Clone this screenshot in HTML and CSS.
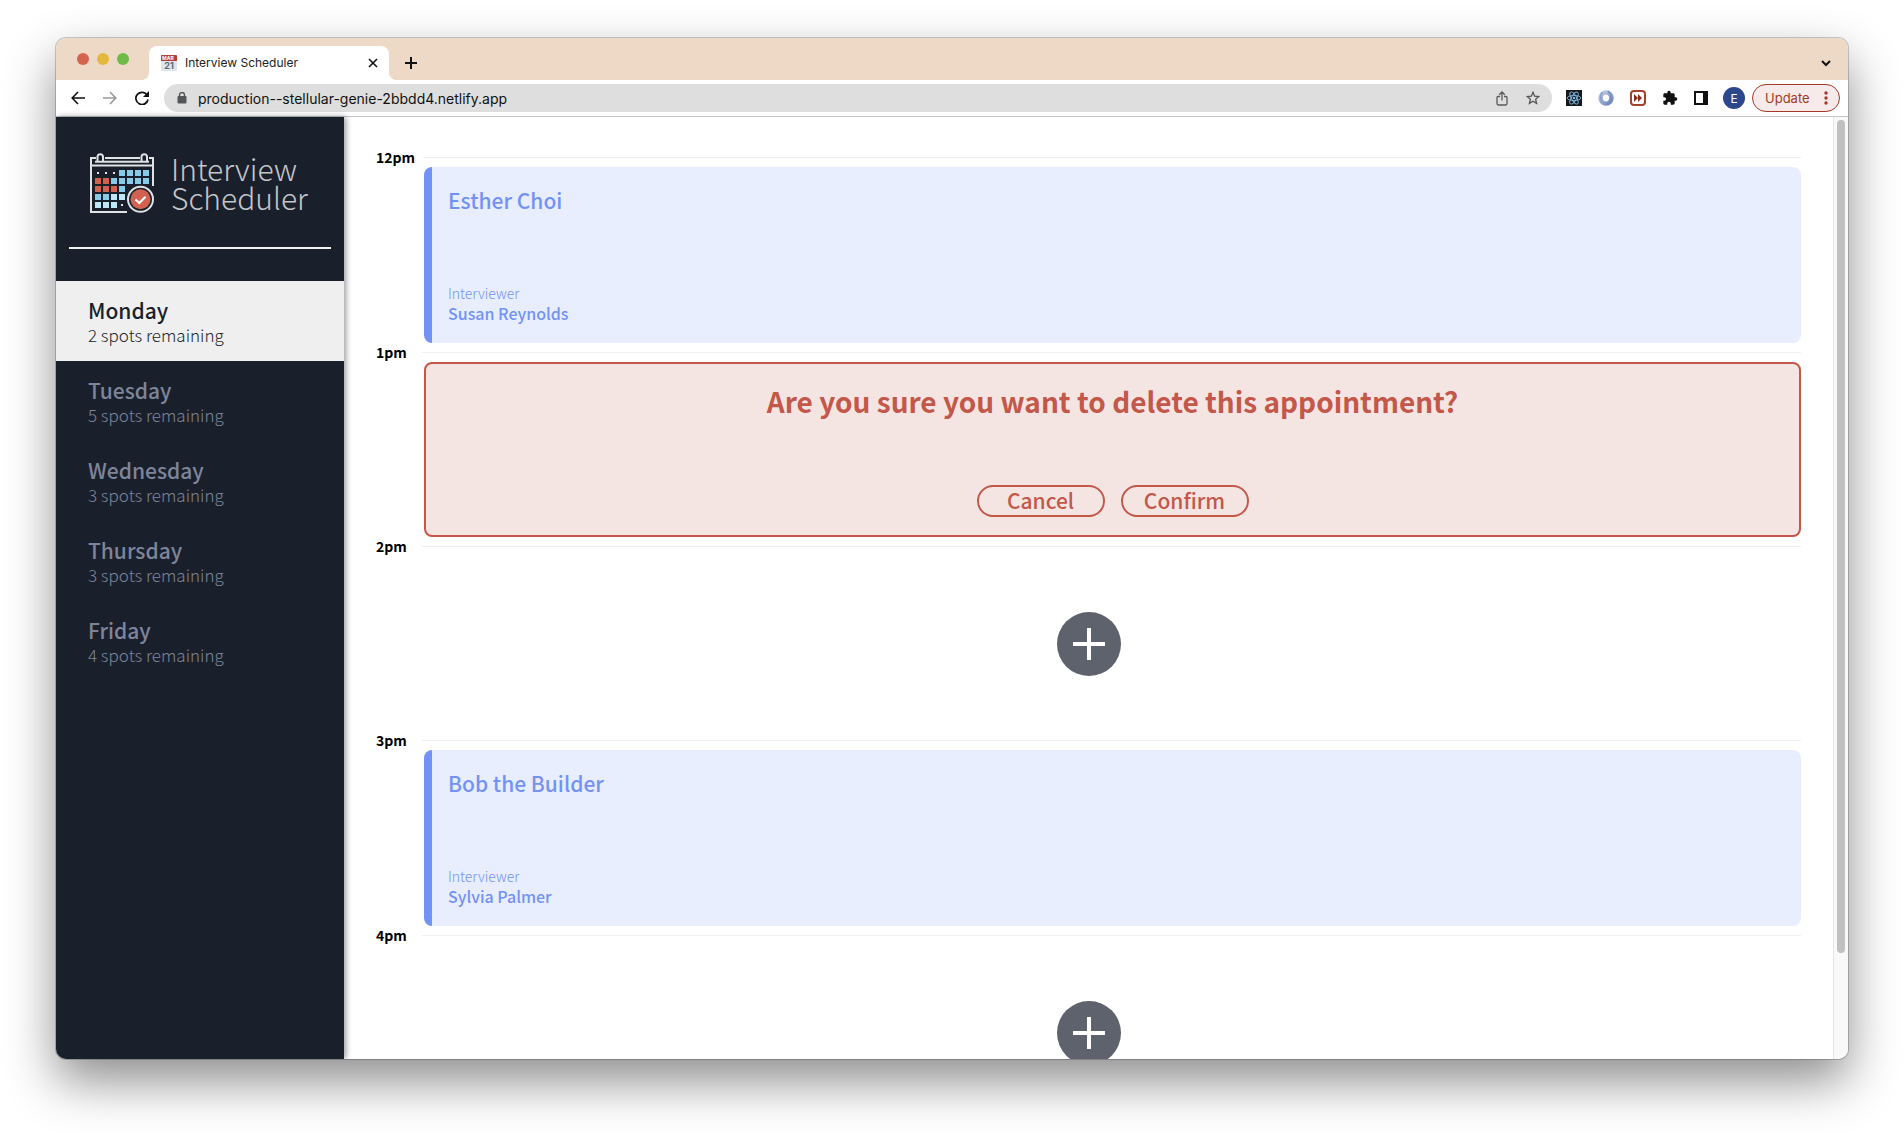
FILE: index.html
```html
<!DOCTYPE html>
<html lang="en">
<head>
<meta charset="utf-8">
<title>Interview Scheduler</title>
<link rel="stylesheet" href="styles.css">
</head>
<body>
<div class="window">
  <header class="tab-strip">
    <div class="lights">
      <span class="light light--close"></span>
      <span class="light light--min"></span>
      <span class="light light--max"></span>
    </div>
    <div class="tab">
      <svg class="favicon" viewBox="0 0 16 16" aria-hidden="true">
        <rect width="16" height="16" rx="1" fill="#dfe5ea"/>
        <path d="M0 1a1 1 0 0 1 1-1h14a1 1 0 0 1 1 1v5H0z" fill="#b5403b"/>
        <text x="1" y="5" class="favicon-month">MAR</text>
        <text x="8" y="14" class="favicon-day">21</text>
      </svg>
      <span class="tab-title">Interview Scheduler</span>
      <button class="icon-button tab-close" aria-label="Close tab">
        <svg width="10" height="10" viewBox="0 0 10 10"><path d="M1 1l8 8M9 1l-8 8" stroke="#111" stroke-width="1.6"/></svg>
      </button>
    </div>
    <button class="icon-button" aria-label="New tab">
      <svg width="12" height="12" viewBox="0 0 12 12"><path d="M6 0v12M0 6h12" stroke="#111" stroke-width="2"/></svg>
    </button>
    <button class="icon-button tab-search" aria-label="Search tabs">
      <svg width="10" height="7" viewBox="0 0 10 7"><path d="M1 1l4 4 4-4" fill="none" stroke="#111" stroke-width="2"/></svg>
    </button>
  </header>

  <nav class="toolbar" aria-label="Browser">
    <button class="icon-button" aria-label="Back">
      <svg width="14" height="14" viewBox="0 0 14 14"><path d="M14 7H1.500M7 1L1.200 7 7 13" fill="none" stroke="#111" stroke-width="1.600"/></svg>
    </button>
    <button class="icon-button" aria-label="Forward">
      <svg width="14" height="14" viewBox="0 0 14 14"><path d="M0 7h12.500M7 1l5.800 6L7 13" fill="none" stroke="#999" stroke-width="1.600"/></svg>
    </button>
    <button class="icon-button" aria-label="Reload">
      <svg width="14" height="14" viewBox="0 0 14 14"><path d="M12.300 4.400A6.100 6.100 0 1 0 13 8.500" fill="none" stroke="#111" stroke-width="1.700"/><path d="M14 0v6H8z" fill="#111"/></svg>
    </button>
    <div class="address">
      <svg width="10" height="12" viewBox="0 0 10 12" aria-hidden="true"><path d="M2.500 5V3a2.500 2.500 0 0 1 5 0v2" fill="none" stroke="#55565a" stroke-width="1.400"/><rect x="0.500" y="4" width="9" height="7.500" rx="1" fill="#55565a"/></svg>
      <input class="address-input" type="text" aria-label="Address" value="production--stellular-genie-2bbdd4.netlify.app">
      <button class="icon-button" aria-label="Share">
        <svg width="12" height="15" viewBox="0 0 12 15"><path d="M4 5.500H2A1 1 0 0 0 1 6.500v6A1.500 1.500 0 0 0 2.500 14h7a1.500 1.500 0 0 0 1.500-1.500v-6a1 1 0 0 0-1-1H8M6 9.500V1.500M3.200 3.800L6 1l2.800 2.800" fill="none" stroke="#5a5a5a" stroke-width="1.300"/></svg>
      </button>
      <button class="icon-button" aria-label="Bookmark">
        <svg width="14" height="14" viewBox="0 0 14 14"><path d="M7 1.300l1.650 3.900 4.150.35-3.150 2.750.95 4.100L7 10.200l-3.600 2.200.95-4.100L1.200 5.550l4.150-.35z" fill="none" stroke="#555" stroke-width="1.300"/></svg>
      </button>
    </div>
    <div class="extensions">
      <button class="icon-button" aria-label="React Developer Tools">
        <svg width="16" height="16" viewBox="0 0 16 16"><rect width="16" height="16" fill="#16181c"/><g fill="none" stroke="#7cb6dc" stroke-width="0.900"><ellipse cx="8" cy="8" rx="6.800" ry="2.600"/><ellipse cx="8" cy="8" rx="6.800" ry="2.600" transform="rotate(60 8 8)"/><ellipse cx="8" cy="8" rx="6.800" ry="2.600" transform="rotate(120 8 8)"/></g><circle cx="8" cy="8" r="1.300" fill="#7cb6dc"/></svg>
      </button>
      <button class="icon-button" aria-label="JSON viewer">
        <svg width="16" height="16" viewBox="0 0 16 16"><defs><linearGradient id="ring" x1="0" y1="0" x2="1" y2="1"><stop offset="0" stop-color="#c3cfe6"/><stop offset="1" stop-color="#6a82b8"/></linearGradient></defs><circle cx="8" cy="8" r="5.400" fill="none" stroke="url(#ring)" stroke-width="4.600"/><path d="M4.500 2C1 6 2.500 12 6 14.500" fill="none" stroke="#8da0cb" stroke-width="1.600"/><path d="M10 1.200c4 3 4 8 0 12" fill="none" stroke="#7b91c2" stroke-width="1.600"/><ellipse cx="8" cy="8" rx="2.600" ry="3.600" fill="#fff"/></svg>
      </button>
      <button class="icon-button" aria-label="Playback speed">
        <svg width="16" height="16" viewBox="0 0 16 16"><rect x="1" y="1" width="14" height="14" rx="3" fill="#fff" stroke="#a3412b" stroke-width="2"/><path d="M4 4l4 4-4 4zM8 4l4 4-4 4z" fill="#8a2c1a"/></svg>
      </button>
      <button class="icon-button" aria-label="Extensions">
        <svg width="16" height="16" viewBox="0 0 24 24"><path d="M20.500 11H19V7c0-1.100-.9-2-2-2h-4V3.500a2.500 2.500 0 0 0-5 0V5H4c-1.100 0-2 .9-2 2v3.800h1.500a2.700 2.700 0 0 1 0 5.400H2V20c0 1.100.9 2 2 2h3.800v-1.500a2.700 2.700 0 0 1 5.400 0V22H17c1.100 0 2-.9 2-2v-4h1.500a2.500 2.500 0 0 0 0-5z" fill="#111"/></svg>
      </button>
      <button class="icon-button" aria-label="Side panel">
        <svg width="14" height="14" viewBox="0 0 14 14"><path d="M0 0h14v14H0z" fill="#111"/><path d="M2 2h7v10H2z" fill="#fff"/></svg>
      </button>
      <button class="avatar" aria-label="Profile">E</button>
    </div>
    <button class="update">Update
      <svg width="4" height="14" viewBox="0 0 4 14" aria-hidden="true"><g fill="#a33a26"><circle cx="2" cy="2" r="1.700"/><circle cx="2" cy="7" r="1.700"/><circle cx="2" cy="12" r="1.700"/></g></svg>
    </button>
  </nav>

  <main class="layout">
    <section class="sidebar">
      <div class="logo">
        <svg class="logo-mark" viewBox="0 0 66 62" aria-hidden="true">
          <g fill="none" stroke="#dfe3e4" stroke-width="2">
            <path d="M7 6H2v54h36M16 6h35M60 6h4v28M1 13.500h63M6 9.800h54"/>
            <path d="M8.500 9V4.500a2.800 2.800 0 0 1 5.500 0V9M52.500 9V4.500a2.800 2.800 0 0 1 5.500 0V9"/>
          </g>
          <g fill="#dfe3e4"><path d="M8 20h2v2H8zM16 20h2v2h-2zM24 20h2v2h-2zM32 52h2v2h-2z"/></g>
          <g fill="#87cbe9"><path d="M30 18h6v6h-6zM38 18h6v6h-6zM46 18h6v6h-6zM54 18h6v6h-6zM22 26h6v6h-6zM30 26h6v6h-6zM38 26h6v6h-6zM46 26h6v6h-6zM54 26h6v6h-6zM30 34h6v6h-6zM6 42h6v6H6zM14 42h6v6h-6z"/></g>
          <g fill="#bfe8f7"><path d="M22 42h6v6h-6zM30 42h6v6h-6zM6 50h6v6H6zM14 50h6v6h-6zM22 50h6v6h-6z"/></g>
          <g fill="#d2624f"><path d="M6 26h6v6H6zM14 26h6v6h-6zM6 34h6v6H6zM14 34h6v6h-6zM22 34h6v6h-6z"/></g>
          <circle cx="51.500" cy="47.300" r="12.500" fill="#1a1f2c" stroke="#dfe3e4" stroke-width="2"/>
          <circle cx="51.500" cy="47.300" r="10" fill="#d2624f"/>
          <path d="M46.500 47.500l3.800 3.500 6.200-6.200" fill="none" stroke="#fff" stroke-width="2.200"/>
        </svg>
        <h1 class="logo-text">Interview Scheduler</h1>
      </div>
      <hr class="divider">
      <ul class="days">
        <li class="day day--selected"><h2 class="day-name">Monday</h2><p class="day-spots">2 spots remaining</p></li>
        <li class="day"><h2 class="day-name">Tuesday</h2><p class="day-spots">5 spots remaining</p></li>
        <li class="day"><h2 class="day-name">Wednesday</h2><p class="day-spots">3 spots remaining</p></li>
        <li class="day"><h2 class="day-name">Thursday</h2><p class="day-spots">3 spots remaining</p></li>
        <li class="day"><h2 class="day-name">Friday</h2><p class="day-spots">4 spots remaining</p></li>
      </ul>
    </section>

    <section class="schedule">
      <article class="slot">
        <header class="slot-time"><h4 class="time">12pm</h4><hr class="rule"></header>
        <div class="card card--show">
          <h2 class="student">Esther Choi</h2>
          <div><h4 class="role">Interviewer</h4><h3 class="interviewer">Susan Reynolds</h3></div>
        </div>
      </article>
      <article class="slot">
        <header class="slot-time"><h4 class="time">1pm</h4><hr class="rule"></header>
        <div class="card card--confirm">
          <h1 class="question">Are you sure you want to delete this appointment?</h1>
          <div class="actions">
            <button class="button">Cancel</button>
            <button class="button">Confirm</button>
          </div>
        </div>
      </article>
      <article class="slot">
        <header class="slot-time"><h4 class="time">2pm</h4><hr class="rule"></header>
        <div class="empty">
          <button class="add" aria-label="Add appointment"><svg width="32" height="32" viewBox="0 0 32 32"><path d="M16 0v32M0 16h32" stroke="#fff" stroke-width="4"/></svg></button>
        </div>
      </article>
      <article class="slot">
        <header class="slot-time"><h4 class="time">3pm</h4><hr class="rule"></header>
        <div class="card card--show">
          <h2 class="student">Bob the Builder</h2>
          <div><h4 class="role">Interviewer</h4><h3 class="interviewer">Sylvia Palmer</h3></div>
        </div>
      </article>
      <article class="slot">
        <header class="slot-time"><h4 class="time">4pm</h4><hr class="rule"></header>
        <div class="empty">
          <button class="add" aria-label="Add appointment"><svg width="32" height="32" viewBox="0 0 32 32"><path d="M16 0v32M0 16h32" stroke="#fff" stroke-width="4"/></svg></button>
        </div>
      </article>
    </section>

    <div class="scroll-track"><div class="scroll-thumb"></div></div>
  </main>
</div>
</body>
</html>
```
FILE: styles.css
```css
* {
  box-sizing: border-box;
  margin: 0;
}

body {
  display: flex;
  height: 100vh;
  padding: 38px 56px 74px;
  background: #fff;
  font-family: "Noto Sans CJK SC", sans-serif;
}

button {
  font-family: inherit;
  padding: 0;
  border: 0;
  background: none;
}

.window {
  flex: 1;
  display: flex;
  flex-direction: column;
  min-width: 0;
  overflow: hidden;
  border-radius: 10px;
  background: #fff;
  box-shadow: 0 0 0 1px rgba(0, 0, 0, 0.2), 0 22px 50px rgba(0, 0, 0, 0.45);
}

/* Browser chrome */

.tab-strip {
  display: flex;
  flex: none;
  align-items: flex-end;
  height: 42px;
  padding: 0 17px 0 21px;
  background: #eed9c6;
  font-family: Inter, sans-serif;
}

.lights {
  display: flex;
  gap: 8px;
  align-self: center;
  width: 72px;
}

.light {
  width: 12px;
  height: 12px;
  border-radius: 50%;
}

.light--close { background: #d4644f; }
.light--min { background: #e4b83e; }
.light--max { background: #6fbb48; }

.tab {
  position: relative;
  display: flex;
  align-items: center;
  gap: 8px;
  width: 240px;
  height: 34px;
  margin-right: 16px;
  padding: 0 11px 0 12px;
  border-radius: 8px 8px 0 0;
  background: #fff;
}

.tab::before,
.tab::after {
  content: "";
  position: absolute;
  bottom: 0;
  width: 8px;
  height: 8px;
}

.tab::before {
  left: -8px;
  background: radial-gradient(circle at 0 0, transparent 8px, #fff 8px);
}

.tab::after {
  right: -8px;
  background: radial-gradient(circle at 100% 0, transparent 8px, #fff 8px);
}

.favicon {
  width: 16px;
  height: 16px;
}

.favicon-month {
  font: bold 5px Inter, sans-serif;
  fill: #fff;
}

.favicon-day {
  font: bold 9px Inter, sans-serif;
  text-anchor: middle;
  fill: #5b6b78;
}

.tab-title {
  flex: 1;
  font-size: 12px;
  line-height: 16px;
  color: #222;
}

.icon-button {
  display: flex;
  align-items: center;
  justify-content: center;
  height: 34px;
}

.tab-search {
  margin-left: auto;
}

.toolbar {
  display: flex;
  flex: none;
  align-items: center;
  gap: 18px;
  height: 37px;
  padding: 0 8px 0 15px;
  border-bottom: 1px solid #c4c4c4;
  font-family: Inter, sans-serif;
}

.address {
  display: flex;
  flex: 1;
  align-items: center;
  gap: 18px;
  height: 28px;
  margin: 0 -4px 0 -3px;
  padding: 0 12px 0 13px;
  border-radius: 14px;
  background: #dedede;
}

.address-input {
  flex: 1;
  min-width: 0;
  margin-left: -7px;
  padding: 0;
  border: 0;
  background: none;
  font: 14px Inter, sans-serif;
  color: #111;
}

.extensions {
  display: flex;
  align-items: center;
  gap: 16px;
}

.avatar {
  width: 22px;
  height: 22px;
  margin-left: -1px;
  border-radius: 50%;
  background: #2c478c;
  color: #fff;
  font-size: 12px;
}

.update {
  display: flex;
  align-items: center;
  justify-content: space-between;
  width: 88px;
  height: 28px;
  margin-left: -11px;
  padding: 0 11px 0 12px;
  border: 1px solid #a33a26;
  border-radius: 14px;
  background: #f6ebea;
  color: #a33a26;
  font-size: 13px;
}

/* Application */

.layout {
  display: flex;
  flex: 1;
  min-height: 0;
}

.sidebar {
  z-index: 1;
  flex: none;
  width: 288px;
  background: #1a1f2c;
  box-shadow: 2px 0 6px rgba(0, 0, 0, 0.4);
}

.logo {
  display: flex;
  align-items: center;
  gap: 16px;
  padding: 35px 0 0 33px;
}

.logo-mark {
  flex: none;
  width: 66px;
  height: 62px;
}

.logo-text {
  width: 140px;
  color: #c4c6c9;
  font-size: 30px;
  font-weight: 300;
  line-height: 29px;
}

.divider {
  height: 2px;
  margin: 33px 13px 32px;
  border: 0;
  background: #efefef;
}

.days {
  padding: 0;
  list-style: none;
}

.day {
  height: 80px;
  padding: 15px 32px;
  color: #7d859a;
}

.day--selected {
  background: #efefef;
  color: #1a1f2c;
}

.day-name {
  font-size: 21px;
  font-weight: 500;
  line-height: 28px;
}

.day-spots {
  font-size: 17px;
  font-weight: 300;
  line-height: 22px;
}

.schedule {
  flex: 1;
  min-width: 0;
  padding: 31px 32px;
  overflow: hidden;
}

.slot-time {
  display: flex;
  align-items: center;
  gap: 8px;
  height: 19px;
}

.time {
  min-width: 38px;
  font-size: 14px;
  font-weight: 700;
  line-height: 19px;
}

.rule {
  flex: 1;
  height: 1px;
  border: 0;
  background: #efefef;
}

.card {
  display: flex;
  flex-direction: column;
  justify-content: space-between;
  margin-left: 48px;
  border-radius: 8px;
}

.card--show {
  height: 176px;
  padding: 18px 16px 20px;
  border-left: 8px solid #7292f6;
  background: #e8eefe;
  color: #7292f6;
}

.student {
  font-size: 21px;
  font-weight: 500;
  line-height: 30px;
}

.role {
  font-size: 14px;
  font-weight: 300;
  line-height: 20px;
}

.interviewer {
  font-size: 16px;
  font-weight: 500;
  line-height: 20px;
}

.card--confirm {
  align-items: center;
  height: 175px;
  padding: 17px 16px 18px;
  border: 2px solid #c3574a;
  background: #f4e5e2;
  color: #c3574a;
}

.question {
  font-size: 28px;
  font-weight: 700;
  line-height: 40px;
}

.actions {
  display: flex;
  gap: 16px;
}

.button {
  width: 128px;
  height: 32px;
  padding-bottom: 2px;
  border: 2px solid #c3574a;
  border-radius: 16px;
  color: #c3574a;
  font-size: 21px;
  font-weight: 500;
  line-height: 26px;
}

.empty {
  display: flex;
  align-items: center;
  justify-content: center;
  height: 175px;
}

.add {
  display: flex;
  align-items: center;
  justify-content: center;
  width: 64px;
  height: 64px;
  border-radius: 50%;
  background: #5e626d;
}

.scroll-track {
  flex: none;
  width: 15px;
  padding: 3px;
  border-left: 1px solid #e6e6e6;
  background: #f9f9f9;
}

.scroll-thumb {
  width: 8px;
  height: 89%;
  border-radius: 4px;
  background: #c1c1c1;
}
```
